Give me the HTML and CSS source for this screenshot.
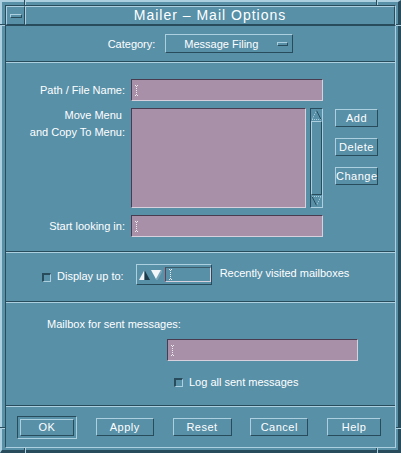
FILE: index.html
```html
<!DOCTYPE html>
<html lang="en">
<head>
    <meta charset="UTF-8">
    <meta name="viewport" content="width=device-width, initial-scale=1.0">
    <title>Mailer - Mail Options</title>
    <link rel="stylesheet" href="styles.css">
</head>
<body>

    <div class="window">
        <!-- resize handle notches on the frame -->
        <span class="notch notch-v tl-v"></span>
        <span class="notch notch-h tl-h"></span>
        <span class="notch notch-v tr-v"></span>
        <span class="notch notch-h tr-h"></span>
        <span class="notch notch-v bl-v"></span>
        <span class="notch notch-h bl-h"></span>
        <span class="notch notch-v br-v"></span>
        <span class="notch notch-h br-h"></span>

        <div class="titlebar">
            <div class="menu-btn"><span class="menu-bar"></span></div>
            <div class="title">Mailer – Mail Options</div>
        </div>

        <div class="client">

            <!-- Category -->
            <div class="category-row">
                <span>Category:</span>
                <div class="option-btn">
                    <span>Message Filing</span>
                    <span class="option-mark"></span>
                </div>
            </div>
            <div class="sep"></div>

            <!-- Message filing paths -->
            <div class="files">
                <div class="label">Path / File Name:</div>
                <div class="field">
                    <svg class="caret" width="5" height="11" viewBox="0 0 5 11"><path d="M1 0h1v1H1zM3 0h1v1H3zM2 1h1v1H2zM2 3h1v1H2zM2 5h1v1H2zM2 7h1v1H2zM2 9h1v1H2zM1 10h1v1H1zM3 10h1v1H3z"/></svg>
                </div>
                <div></div>

                <div class="label label-top">Move Menu&nbsp;<br>and Copy To Menu:</div>
                <div class="list-wrap">
                    <div class="list"></div>
                    <div class="scrollbar">
                        <svg class="scroll-arrow" width="11" height="12" viewBox="0 0 11 12">
                            <path d="M5.5 1.5L1 10.5H10" fill="none" stroke="#acd0e0" stroke-dasharray="1 1"/>
                            <path d="M5.5 1.5L10 10.5" fill="none" stroke="#284c5c"/>
                        </svg>
                        <div class="slider"></div>
                        <svg class="scroll-arrow" width="11" height="12" viewBox="0 0 11 12">
                            <path d="M1 1.5H10L5.5 10.5" fill="none" stroke="#acd0e0" stroke-dasharray="1 1"/>
                            <path d="M1 1.5L5.5 10.5" fill="none" stroke="#284c5c"/>
                        </svg>
                    </div>
                </div>
                <div class="side-btns">
                    <button class="push">Add</button>
                    <button class="push">Delete</button>
                    <button class="push">Change</button>
                </div>

                <div class="label">Start looking in:</div>
                <div class="field">
                    <svg class="caret" width="5" height="11" viewBox="0 0 5 11"><path d="M1 0h1v1H1zM3 0h1v1H3zM2 1h1v1H2zM2 3h1v1H2zM2 5h1v1H2zM2 7h1v1H2zM2 9h1v1H2zM1 10h1v1H1zM3 10h1v1H3z"/></svg>
                </div>
                <div></div>
            </div>
            <div class="sep"></div>

            <!-- Recently visited -->
            <div class="recent">
                <span class="check"></span>
                <span class="recent-label">Display up to:</span>
                <div class="spin">
                    <svg width="11" height="10" viewBox="0 0 11 10">
                        <polygon points="5.5,0 0,10 5.5,10" fill="#f2f6f8"/>
                        <polygon points="5.5,0 11,10 5.5,10" fill="#1e3a48"/>
                    </svg>
                    <svg class="down" width="11" height="10" viewBox="0 0 11 10">
                        <polygon points="0,0 11,0 5.5,10" fill="#f2f6f8"/>
                        <polyline points="11,0 5.5,10" fill="none" stroke="#7aa4b8" stroke-width="2"/>
                    </svg>
                    <div class="spin-field">
                        <svg class="caret" width="5" height="11" viewBox="0 0 5 11"><path d="M1 0h1v1H1zM3 0h1v1H3zM2 1h1v1H2zM2 3h1v1H2zM2 5h1v1H2zM2 7h1v1H2zM2 9h1v1H2zM1 10h1v1H1zM3 10h1v1H3z"/></svg>
                    </div>
                </div>
                <span class="recent-text">Recently visited mailboxes</span>
            </div>
            <div class="sep"></div>

            <!-- Sent messages -->
            <div class="sent">
                <div class="sent-label">Mailbox for sent messages:</div>
                <div class="field sent-field">
                    <svg class="caret" width="5" height="11" viewBox="0 0 5 11"><path d="M1 0h1v1H1zM3 0h1v1H3zM2 1h1v1H2zM2 3h1v1H2zM2 5h1v1H2zM2 7h1v1H2zM2 9h1v1H2zM1 10h1v1H1zM3 10h1v1H3z"/></svg>
                </div>
                <div class="log-row">
                    <span class="check"></span>
                    <span>Log all sent messages</span>
                </div>
            </div>
            <div class="sep"></div>

            <!-- Dialog buttons -->
            <div class="actions">
                <div class="default-frame"><button class="push btn-ok">OK</button></div>
                <button class="push btn-apply">Apply</button>
                <button class="push btn-reset">Reset</button>
                <button class="push btn-cancel">Cancel</button>
                <button class="push btn-help">Help</button>
            </div>
        </div>
    </div>

</body>
</html>
```

FILE: styles.css
```css
body {
    margin: 0;
    background-color: #5890a8;
    font-family: "Liberation Sans", Arial, sans-serif;
    font-size: 11px;
    color: #ffffff;
}
.window {
    position: relative;
    width: 401px;
    height: 453px;
    box-sizing: border-box;
    border-style: solid;
    border-width: 2px 3px 3px 2px;
    border-color: #acd0e0 #284c5c #284c5c #acd0e0;
    padding: 3px 2px 2px 3px;
    display: flex;
    flex-direction: column;
    background-color: #5890a8;
}

/* frame notches */
.notch {
    position: absolute;
    background-color: #284c5c;
}
.notch-v {
    width: 1px;
    height: 5px;
    box-shadow: 1px 0 0 #acd0e0;
}
.notch-h {
    width: 5px;
    height: 1px;
    box-shadow: 0 1px 0 #acd0e0;
}
.tl-v { left: 22px; top: -2px; }
.tl-h { left: -2px; top: 22px; }
.tr-v { left: 374px; top: -2px; }
.tr-h { right: -3px; top: 22px; }
.bl-v { left: 22px; bottom: -3px; }
.bl-h { left: -2px; top: 425px; }
.br-v { left: 374px; bottom: -3px; }
.br-h { right: -3px; top: 425px; }

/* title bar */
.titlebar {
    height: 20px;
    box-sizing: border-box;
    display: flex;
    border-top: 1px solid #284c5c;
    border-left: 1px solid #284c5c;
    border-right: 1px solid #acd0e0;
}
.menu-btn {
    width: 19px;
    box-sizing: border-box;
    border: 1px solid;
    border-color: #acd0e0 #284c5c #284c5c #acd0e0;
    display: flex;
    align-items: center;
    justify-content: center;
}
.menu-bar {
    width: 10px;
    height: 2px;
    border: 1px solid;
    border-color: #acd0e0 #284c5c #284c5c #acd0e0;
}
.title {
    flex: 1;
    box-sizing: border-box;
    border: 1px solid;
    border-color: #acd0e0 #284c5c #284c5c #acd0e0;
    text-align: center;
    font-size: 14px;
    letter-spacing: 1px;
    line-height: 17px;
}

/* client area */
.client {
    height: 423px;
    box-sizing: border-box;
    border: 1px solid;
    border-color: #284c5c #acd0e0 #acd0e0 #284c5c;
    display: flex;
    flex-direction: column;
}
.sep {
    border-top: 1px solid #284c5c;
    border-bottom: 1px solid #acd0e0;
}

.category-row {
    height: 35px;
    display: flex;
    align-items: center;
    justify-content: center;
    gap: 10px;
}
.option-btn {
    width: 128px;
    height: 19px;
    box-sizing: border-box;
    border: 1px solid;
    border-color: #acd0e0 #284c5c #284c5c #acd0e0;
    display: flex;
    align-items: center;
    justify-content: space-between;
    padding: 0 4px 0 18px;
}
.option-mark {
    width: 9px;
    height: 2px;
    border: 1px solid;
    border-color: #acd0e0 #284c5c #284c5c #acd0e0;
}

.files {
    height: 188px;
    box-sizing: border-box;
    padding-top: 16px;
    display: grid;
    grid-template-columns: 119px 192px 49px;
    grid-template-rows: 22px 100px 22px;
    column-gap: 6px;
    row-gap: 7px;
    align-content: start;
}
.label {
    text-align: right;
    align-self: center;
}
.label-top {
    align-self: start;
    line-height: 17px;
    margin-top: -1px;
}
.field {
    background-color: #a890a8;
    box-sizing: border-box;
    border: 1px solid;
    border-color: #4a3c50 #d8d0dc #d8d0dc #4a3c50;
    display: flex;
    align-items: center;
    padding-left: 2px;
}
.caret {
    fill: #eeeaf0;
}
.list-wrap {
    display: flex;
    gap: 4px;
}
.list {
    width: 176px;
    background-color: #a890a8;
    box-sizing: border-box;
    border: 1px solid;
    border-color: #4a3c50 #d8d0dc #d8d0dc #4a3c50;
}
.scrollbar {
    width: 13px;
    box-sizing: border-box;
    border: 1px solid;
    border-color: #284c5c #acd0e0 #acd0e0 #284c5c;
    display: flex;
    flex-direction: column;
}
.slider {
    flex: 1;
    border: 1px solid;
    border-color: #acd0e0 #284c5c #284c5c #acd0e0;
}
.side-btns {
    margin-left: 6px;
    padding-top: 1px;
    display: flex;
    flex-direction: column;
    gap: 11px;
}

.push {
    height: 18px;
    box-sizing: border-box;
    border: 1px solid;
    border-color: #acd0e0 #284c5c #284c5c #acd0e0;
    background-color: #5890a8;
    color: #ffffff;
    font: inherit;
    letter-spacing: 0.5px;
    padding: 0;
}

.recent {
    height: 48px;
    box-sizing: border-box;
    padding: 11px 0 0 36px;
    display: flex;
    align-items: flex-start;
}
.check {
    width: 9px;
    height: 9px;
    box-sizing: border-box;
    border-style: solid;
    border-width: 2px 1px 1px 2px;
    border-color: #284c5c #acd0e0 #acd0e0 #284c5c;
    margin-right: 6px;
}
.recent .check {
    margin-top: 9px;
}
.recent-label {
    margin-top: 5px;
    line-height: 14px;
}
.spin {
    margin-left: 12px;
    width: 76px;
    height: 21px;
    box-sizing: border-box;
    border: 1px solid;
    border-color: #acd0e0 #284c5c #284c5c #acd0e0;
    display: flex;
    align-items: center;
    padding-left: 2px;
    gap: 1px;
}
.spin .down {
    margin-right: 2px;
}
.spin-field {
    width: 46px;
    height: 15px;
    box-sizing: border-box;
    border: 1px solid;
    border-color: #3c5c6c #d8d0dc #d8d0dc #6e3c50;
    display: flex;
    align-items: center;
    padding-left: 2px;
}
.recent-text {
    margin-left: 8px;
    margin-top: 2px;
    line-height: 14px;
}

.sent {
    height: 102px;
    box-sizing: border-box;
    padding-top: 14px;
    display: flex;
    flex-direction: column;
}
.sent-label {
    margin-left: 41px;
    line-height: 14px;
}
.sent-field {
    margin-left: 161px;
    margin-top: 8px;
    width: 191px;
    height: 22px;
}
.log-row {
    margin-left: 168px;
    margin-top: 14px;
    display: flex;
    align-items: center;
    line-height: 14px;
}

.actions {
    flex: 1;
    display: flex;
    align-items: center;
    justify-content: space-between;
    padding: 0 14px 0 11px;
}
.default-frame {
    border: 1px solid;
    border-color: #284c5c #acd0e0 #acd0e0 #284c5c;
    padding: 2px;
    display: flex;
}
.btn-ok {
    width: 54px;
    height: 17px;
}
.btn-apply { width: 58px; }
.btn-reset { width: 59px; }
.btn-cancel { width: 58px; }
.btn-help { width: 54px; }
```
